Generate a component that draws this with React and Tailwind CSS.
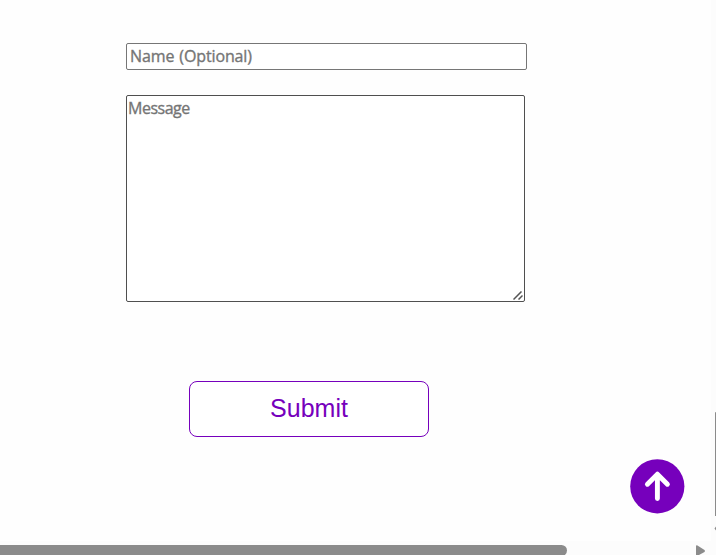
function SubmitForm() {
  return (
    <form className="flex flex-col items-start pl-[126px] pt-[43px]" onSubmit={(e) => e.preventDefault()}>
      <input
        type="text"
        placeholder="Name (Optional)"
        className="block h-[27px] w-[401px] rounded-[2px] border border-[#767676] bg-white pb-[2px] pl-[3px] font-['Trebuchet_MS','Open_Sans',sans-serif] text-[16px] leading-[18px] tracking-[-0.12px] [word-spacing:1px] placeholder:text-[#757575] placeholder:[-webkit-text-stroke:0.35px_#757575] outline-none"
      />
      <div className="relative mt-[25px] h-[207px] w-[399px]">
        <textarea
          placeholder="Message"
          className="block h-full w-full resize-none rounded-[2px] border border-[#4f4f4f] bg-white px-[2px] pl-px pt-[3px] font-['Trebuchet_MS','Open_Sans',sans-serif] text-[16px] leading-[18px] tracking-[-0.5px] placeholder:text-[#757575] placeholder:[-webkit-text-stroke:0.35px_#757575] outline-none"
        />
        <svg className="absolute right-[2px] bottom-[2px]" width="10" height="9" viewBox="0 0 10 9" fill="none" stroke="#555" strokeWidth="1.5">
          <path d="M0.5 8.5L8.5 0.5M5.5 8.5L9.5 4.5" />
        </svg>
      </div>
      <button
        type="submit"
        className="mt-[79px] ml-[63px] h-[56px] w-[240px] rounded-[8px] border border-[#7600bc] bg-white pb-px font-['Liberation_Sans',Arial,sans-serif] text-[25px] leading-[29px] text-[#7600bc]"
      >
        Submit
      </button>
    </form>
  );
}

function BackToTop() {
  return (
    <button aria-label="Back to top" className="absolute left-[630px] top-[459px] h-[55px] w-[55px]">
      <svg width="55" height="55" viewBox="0 0 55 55" fill="none">
        <circle cx="27.3" cy="27.3" r="27.1" fill="#7600bc" />
        <path d="M17.4 25.2L27.4 15.2L37.4 25.2M27.4 16V39.6" stroke="white" strokeWidth="4.9" strokeLinecap="round" strokeLinejoin="round" />
      </svg>
    </button>
  );
}

export default function App() {
  return (
    <div className="relative flex h-[555px] w-[716px] flex-col overflow-hidden bg-[#fefefe]">
      <div className="flex h-[541px]">
        <main className="w-[711px]">
          <SubmitForm />
        </main>
        <div className="flex w-[5px] flex-col items-end bg-[#fcfcfc] pt-[412px]">
          <div className="h-[104px] w-px rounded-tl-[1px] bg-[#8b8b8b]" />
          <svg className="mt-[10px]" width="2" height="5" viewBox="0 0 2 5">
            <path d="M2 0.5L0.5 2.5L2 4.5Z" fill="#8b8b8b" />
          </svg>
        </div>
      </div>
      <div className="flex h-[14px] items-start bg-[#fcfcfc] pt-[4px]">
        <div className="h-[11px] w-[567px] shrink-0 rounded-r-[5.5px] bg-[#8b8b8b]" />
        <svg className="ml-[129px] shrink-0" width="10" height="10" viewBox="0 0 10 10">
          <path d="M0 1Q0 0 1.5 0.5L8.5 5Q9.5 6 8.5 7L3 10H0Z" fill="#8b8b8b" />
        </svg>
      </div>
      <BackToTop />
    </div>
  );
}
